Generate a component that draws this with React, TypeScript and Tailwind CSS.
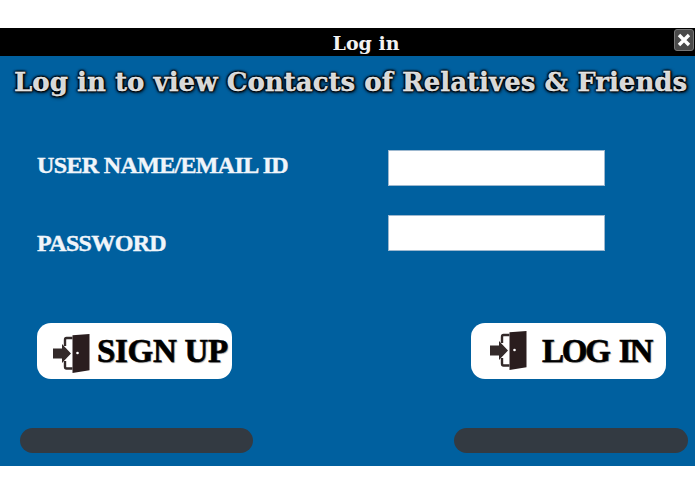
import React from 'react';

const DoorIcon = () => (
    <svg width="37" height="40" viewBox="0 0 37 40" className="shrink-0">
        <path d="M19.5 1.2 L36.5 0 V36.2 L19.5 39 Z" fill="#2a1d1e" />
        <circle cx="24.5" cy="19" r="1.3" fill="#fff" />
        <path d="M0 14.5 H9 V10 L18 19.5 L9 29 V24.5 H0 Z" fill="#332a2a" />
        <path d="M19.5 4 H13.5 Q12 4 12 6 V12 M19.5 34.5 H13.5 Q12 34.5 12 32.5 V27" fill="none" stroke="#332a2a" strokeWidth="2.4" />
    </svg>
);

const ActionButton = ({ label, className, iconClass, textClass }: { label: string; className: string; iconClass: string; textClass: string }) => (
    <button type="button" className={`w-[195px] h-[56px] bg-white rounded-[14px] flex items-center ${className}`}>
        <span className={`shrink-0 ${iconClass}`}>
            <DoorIcon />
        </span>
        <span className={`whitespace-nowrap font-['Liberation_Serif',serif] font-bold text-[33px] leading-none text-black [-webkit-text-stroke:0.6px_#000] [text-shadow:1px_1px_1px_#999] ${textClass}`}>{label}</span>
    </button>
);

const Field = ({ label, mt, labelClass }: { label: string; mt: string; labelClass: string }) => (
    <div className={`flex items-center justify-between h-[36px] ${mt}`}>
        <label className={`font-['Liberation_Serif',serif] font-bold text-[24px] tracking-[-0.65px] leading-none text-[#f0f5fa] [-webkit-text-stroke:0.4px_#f0f5fa] ${labelClass}`}>{label}</label>
        <input className="w-[217px] h-[36px] bg-white border border-[#9db8cf] mr-[90px]" />
    </div>
);

export default function App() {
    return (
        <div className="w-[695px] h-[494px] bg-white pt-[28px] overflow-hidden">
            <div className="relative h-[28px] bg-black flex items-center justify-center pl-[37px]">
                <span className="font-['DejaVu_Serif',serif] font-bold text-[19px] leading-none text-[#f2f2f2] translate-y-[1px]">Log in</span>
                <button type="button" className="absolute right-[1px] top-[1px] w-[20px] h-[22px] rounded-[3px] bg-[#4a4a4a] border border-[#777] flex items-center justify-center">
                    <svg width="14" height="14" viewBox="0 0 14 14">
                        <path d="M2 2 L12 12 M12 2 L2 12" stroke="#fff" strokeWidth="3.4" />
                    </svg>
                </button>
            </div>
            <div className="h-[410px] bg-[#00609f] flex flex-col">
                <h1 className="mt-[10px] h-[32px] pl-[14px] whitespace-nowrap font-['DejaVu_Serif',serif] font-bold text-[26px] tracking-[0.04px] leading-[32px] text-[#d8d8d8] [-webkit-text-stroke:0.3px_#fff] [text-shadow:0_0_2px_#000,0_0_2px_#000,0_0_2px_#000,0_0_3px_#000,0_0_3px_#000,0_0_3px_#000,1px_1px_4px_#000]">
                    Log in to view Contacts of Relatives &amp; Friends
                </h1>
                <div className="pl-[37px] mt-[52px]">
                    <Field label="USER NAME/EMAIL ID" mt="mt-0" labelClass="-translate-y-[3px]" />
                    <Field label="PASSWORD" mt="mt-[29px]" labelClass="translate-y-[10px]" />
                </div>
                <div className="flex justify-between pl-[37px] pr-[29px] mt-[72px]">
                    <ActionButton label="SIGN UP" className="pl-[16px] gap-[7px]" iconClass="translate-y-[3px]" textClass="tracking-[-0.3px]" />
                    <ActionButton label="LOG IN" className="pl-[19px] gap-[15px]" iconClass="" textClass="tracking-[-2.2px] [word-spacing:4px]" />
                </div>
                <div className="flex justify-between pl-[20px] pr-[7px] mt-[49px]">
                    <div className="w-[233px] h-[25px] rounded-full bg-[#333a42]" />
                    <div className="w-[234px] h-[25px] rounded-full bg-[#333a42]" />
                </div>
            </div>
        </div>
    );
}
